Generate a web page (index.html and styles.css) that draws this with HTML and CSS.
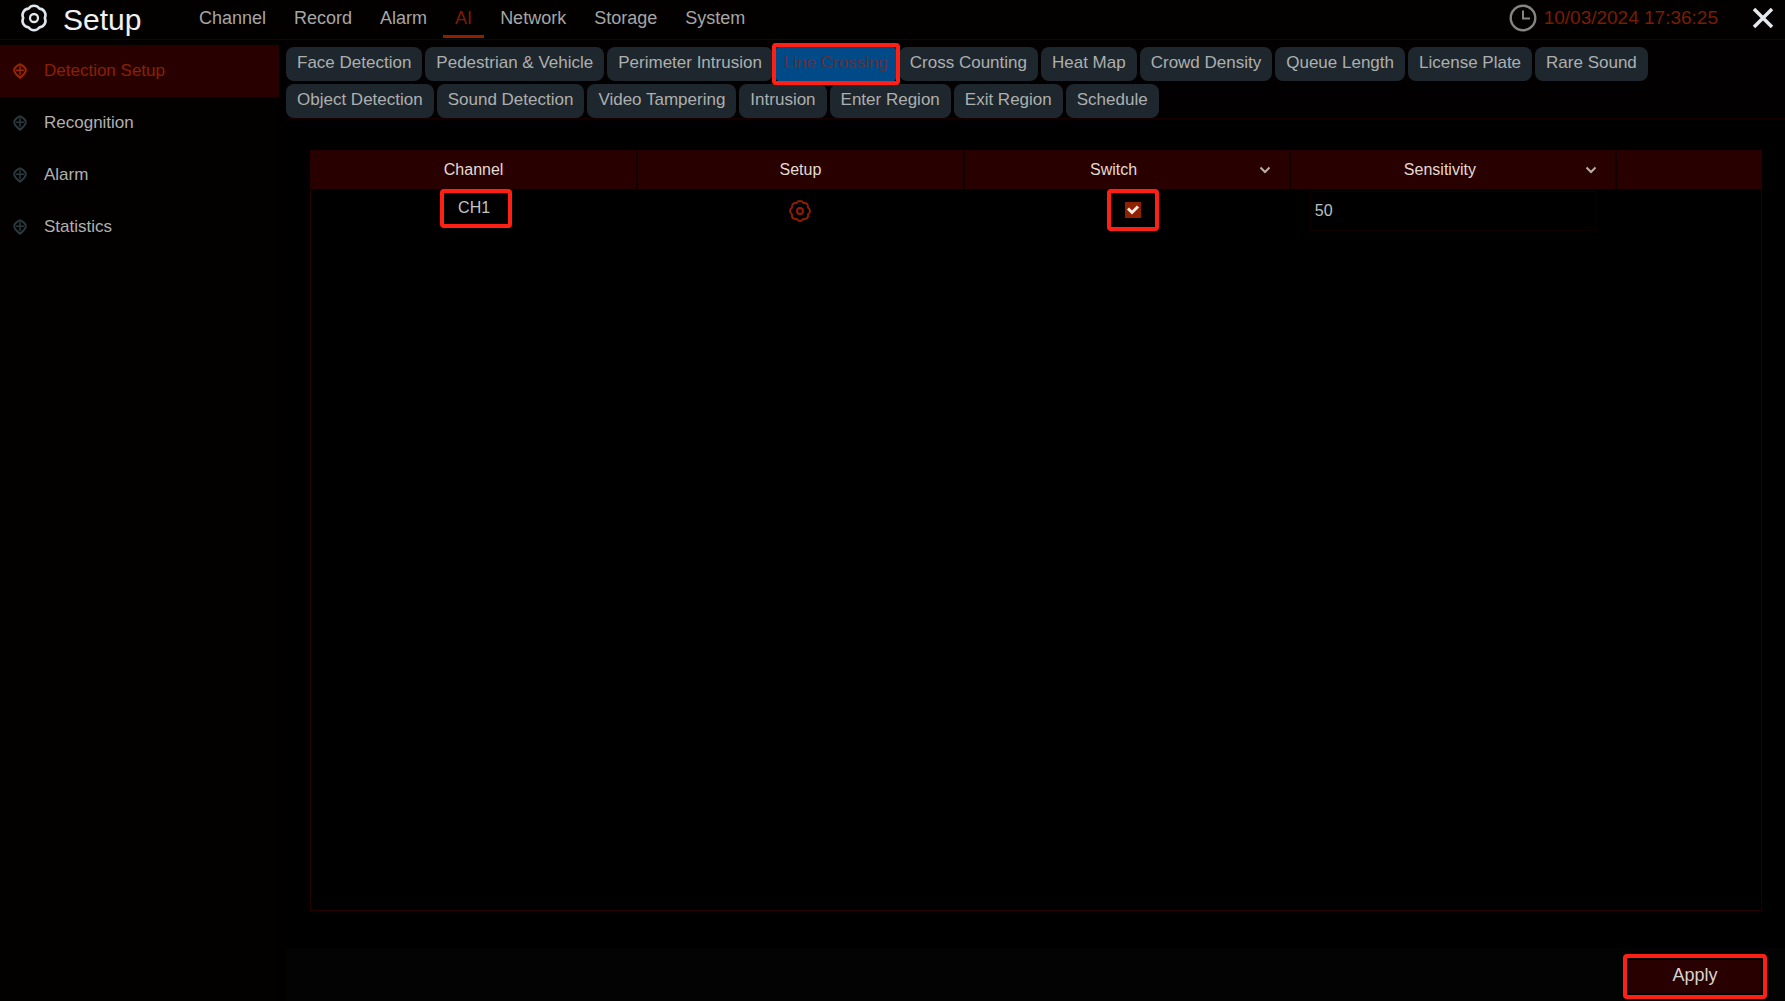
FILE: index.html
```html
<!DOCTYPE html>
<html lang="en">
<head>
<meta charset="utf-8">
<title>Setup</title>
<link rel="stylesheet" href="styles.css">
</head>
<body>
<svg class="defs" aria-hidden="true">
  <symbol id="marker" viewBox="0 0 14 16">
    <path d="M7 1.300C9 2.300 12.800 4 12.800 7.200C12.800 10.200 9 13 7 14.700C5 13 1.200 10.200 1.200 7.200C1.200 4 5 2.300 7 1.300Z" fill="none" stroke="currentColor" stroke-width="2"/>
    <path d="M7 3V12M3 7.300H11" fill="none" stroke="currentColor" stroke-width="1.500"/>
  </symbol>
  <symbol id="chevron" viewBox="0 0 12 8">
    <path d="M1.500 1.500L6 6L10.500 1.500" fill="none" stroke="currentColor" stroke-width="2"/>
  </symbol>
</svg>

<header class="topbar">
  <svg class="brand-icon" viewBox="0 0 28 28" aria-hidden="true">
    <path d="M24.800 14A6.500 6.500 0 0 1 19.400 23.350A6.500 6.500 0 0 1 8.600 23.350A6.500 6.500 0 0 1 3.200 14A6.500 6.500 0 0 1 8.600 4.650A6.500 6.500 0 0 1 19.400 4.650A6.500 6.500 0 0 1 24.800 14Z" fill="none" stroke="currentColor" stroke-width="2.600" stroke-linejoin="round"/>
    <circle cx="14" cy="14" r="4" fill="none" stroke="currentColor" stroke-width="2.300"/>
  </svg>
  <h1 class="brand">Setup</h1>
  <nav class="main-nav" aria-label="Main">
    <a href="#channel">Channel</a>
    <a href="#record">Record</a>
    <a href="#alarm">Alarm</a>
    <a href="#ai" class="active" aria-current="page">AI</a>
    <a href="#network">Network</a>
    <a href="#storage">Storage</a>
    <a href="#system">System</a>
  </nav>
  <svg class="clock-icon" viewBox="0 0 28 28" aria-hidden="true">
    <circle cx="14" cy="14" r="12.300" fill="none" stroke="currentColor" stroke-width="2.400"/>
    <path d="M14 6.500V14.500H21" fill="none" stroke="currentColor" stroke-width="2"/>
  </svg>
  <time class="clock" datetime="2024-10-03T17:36:25">10/03/2024 17:36:25</time>
  <button class="close" type="button" aria-label="Close">
    <svg viewBox="0 0 22 22" aria-hidden="true"><path d="M2 2L20 20M20 2L2 20" stroke="currentColor" stroke-width="3.500" fill="none"/></svg>
  </button>
</header>

<div class="shell">
  <nav class="sidebar" aria-label="AI">
    <a href="#detection" class="active" aria-current="page"><svg aria-hidden="true"><use href="#marker"/></svg>Detection Setup</a>
    <a href="#recognition"><svg aria-hidden="true"><use href="#marker"/></svg>Recognition</a>
    <a href="#ai-alarm"><svg aria-hidden="true"><use href="#marker"/></svg>Alarm</a>
    <a href="#statistics"><svg aria-hidden="true"><use href="#marker"/></svg>Statistics</a>
  </nav>

  <main class="content">
    <div class="tabs" role="tablist">
      <button class="tab" type="button" role="tab">Face Detection</button>
      <button class="tab" type="button" role="tab">Pedestrian &amp; Vehicle</button>
      <button class="tab" type="button" role="tab">Perimeter Intrusion</button>
      <button class="tab selected marked" type="button" role="tab" aria-selected="true">Line Crossing</button>
      <button class="tab" type="button" role="tab">Cross Counting</button>
      <button class="tab" type="button" role="tab">Heat Map</button>
      <button class="tab" type="button" role="tab">Crowd Density</button>
      <button class="tab" type="button" role="tab">Queue Length</button>
      <button class="tab" type="button" role="tab">License Plate</button>
      <button class="tab" type="button" role="tab">Rare Sound</button>
      <button class="tab" type="button" role="tab">Object Detection</button>
      <button class="tab" type="button" role="tab">Sound Detection</button>
      <button class="tab" type="button" role="tab">Video Tampering</button>
      <button class="tab" type="button" role="tab">Intrusion</button>
      <button class="tab" type="button" role="tab">Enter Region</button>
      <button class="tab" type="button" role="tab">Exit Region</button>
      <button class="tab" type="button" role="tab">Schedule</button>
    </div>

    <div class="panel">
      <table class="channels">
        <colgroup><col class="col"><col class="col"><col class="col"><col class="col"><col></colgroup>
        <thead>
          <tr>
            <th scope="col">Channel</th>
            <th scope="col">Setup</th>
            <th scope="col"><div class="menu-head"><span id="switch-head">Switch</span><button type="button" aria-label="Switch options"><svg aria-hidden="true"><use href="#chevron"/></svg></button></div></th>
            <th scope="col"><div class="menu-head"><span id="sens-head">Sensitivity</span><button type="button" aria-label="Sensitivity options"><svg aria-hidden="true"><use href="#chevron"/></svg></button></div></th>
            <td></td>
          </tr>
        </thead>
        <tbody>
          <tr>
            <td class="name-cell"><span class="channel-name marked">CH1</span></td>
            <td class="setup-cell">
              <button class="row-setup" type="button" aria-label="Set up CH1">
                <svg viewBox="0 0 28 28" aria-hidden="true">
                  <path d="M24.160 18.210A4.800 4.800 0 0 1 18.210 24.160A4.800 4.800 0 0 1 9.790 24.160A4.800 4.800 0 0 1 3.840 18.210A4.800 4.800 0 0 1 3.840 9.790A4.800 4.800 0 0 1 9.790 3.840A4.800 4.800 0 0 1 18.210 3.840A4.800 4.800 0 0 1 24.160 9.790A4.800 4.800 0 0 1 24.160 18.210Z" fill="none" stroke="currentColor" stroke-width="2.400" stroke-linejoin="round"/>
                  <circle cx="14" cy="14" r="3.800" fill="none" stroke="currentColor" stroke-width="2.600"/>
                </svg>
              </button>
            </td>
            <td class="switch-cell">
              <label class="switch marked">
                <input type="checkbox" checked aria-labelledby="switch-head">
                <svg viewBox="0 0 16 16" aria-hidden="true"><path d="M3 6.500L7 10.500L13 4.500" fill="none" stroke="currentColor" stroke-width="3"/></svg>
              </label>
            </td>
            <td class="sens-cell"><input class="sens" type="text" value="50" aria-labelledby="sens-head"></td>
            <td></td>
          </tr>
        </tbody>
      </table>
    </div>

    <footer class="actions">
      <button class="apply marked" type="button">Apply</button>
    </footer>
  </main>
</div>
</body>
</html>
```
FILE: styles.css
```css
:root {
  --accent: #7d1c00;
  --line: #260000;
  --head: #290000;
  --mark: #ff2015;
}

* { box-sizing: border-box; }

body {
  margin: 0;
  min-height: 100vh;
  display: flex;
  flex-direction: column;
  background: #000;
  color: #b4b4b4;
  font-family: "Liberation Sans", Arial, sans-serif;
  font-size: 17px;
}

a { color: inherit; text-decoration: none; }

button, input { font: inherit; color: inherit; }

button {
  border: 0;
  padding: 0;
  background: none;
}

svg { display: block; }

.defs { position: absolute; width: 0; height: 0; }

/* Red callout frames drawn over the controls */
.marked { position: relative; }

.marked::after {
  content: "";
  position: absolute;
  inset: -4px;
  border: 4px solid var(--mark);
  border-radius: 4px;
  pointer-events: none;
}

/* Top bar */
.topbar {
  display: flex;
  align-items: center;
  height: 40px;
  padding: 0 11px 4px 20px;
  background: #030000;
  border-bottom: 1px solid var(--line);
}

.brand-icon { width: 28px; height: 28px; color: #dfe6ec; }

.brand {
  width: 124px;
  margin: 4px 0 0 15px;
  color: #f0f0f0;
  font-size: 30px;
  font-weight: 400;
  line-height: 34px;
}

.main-nav {
  display: flex;
  gap: 4px;
  flex: 1;
  font-size: 18px;
  line-height: 34px;
  color: #a6a6a6;
}

.main-nav a { position: relative; padding: 0 12px; }

.main-nav .active { color: var(--accent); }

.main-nav .active::after {
  content: "";
  position: absolute;
  left: 0;
  right: 0;
  bottom: -3px;
  height: 3px;
  background: #8c2000;
}

.clock-icon { width: 28px; height: 28px; color: #858585; }

.clock {
  margin: 0 34px 0 7px;
  color: #7a1d00;
  font-size: 19px;
}

.close { width: 22px; height: 22px; color: #e4e9ee; }

/* Main layout */
.shell { display: flex; flex: 1; }

.sidebar {
  flex: 0 0 279px;
  padding-top: 5px;
  background: #030000;
}

.sidebar a {
  display: flex;
  align-items: center;
  gap: 17px;
  height: 52px;
  padding-left: 13px;
  color: #b0b0b0;
}

.sidebar svg { width: 14px; height: 16px; color: #2a393f; }

.sidebar .active { background: var(--head); color: #8a2100; }

.sidebar .active svg { color: #9c2600; }

.content {
  flex: 1;
  min-width: 0;
  display: flex;
  flex-direction: column;
  padding-left: 7px;
}

/* Tabs */
.tabs {
  display: flex;
  flex-wrap: wrap;
  gap: 3px;
  padding-top: 7px;
  border-bottom: 1px solid #1a0000;
  background: #020000;
}

.tab {
  height: 34px;
  padding: 0 11px 2px;
  border-radius: 8px;
  background: #1e272d;
  color: #adafaf;
  white-space: nowrap;
}

.tab.selected {
  padding: 0 8px 2px;
  border-radius: 3px;
  background: #004b87;
  color: #652f3a;
}

/* Channel table */
.panel {
  flex: 1;
  margin: 31px 23px 37px 24px;
  border: 1px solid var(--line);
}

.channels {
  width: 100%;
  border-collapse: collapse;
  table-layout: fixed;
  font-size: 16px;
}

.col { width: 22.5%; }

.channels thead { background: var(--head); color: #e2dcd0; }

.channels th, .channels td {
  padding: 0;
  text-align: center;
  font-weight: 400;
}

.channels thead tr { height: 38px; }

.channels thead th { border-right: 2px solid #100000; }

.menu-head {
  display: flex;
  align-items: center;
  padding-right: 18px;
}

.menu-head span { flex: 1; padding-left: 4px; }

.menu-head svg { width: 12px; height: 8px; color: #b9afa8; }

.channels tbody tr { height: 42px; color: #c4c4c4; }

.channels .name-cell { padding: 0 0 3px 4px; }

.channel-name {
  display: inline-block;
  padding: 6px 18px 7px 14px;
}

.channels .setup-cell { padding-top: 2px; }

.row-setup, .row-setup svg {
  width: 22px;
  height: 22px;
  margin: auto;
  color: #941c00;
}

.row-setup { vertical-align: middle; }

.channels .switch-cell { padding-left: 12px; }

.switch {
  display: inline-grid;
  place-items: center;
  width: 44px;
  height: 34px;
  vertical-align: middle;
}

.switch input, .switch svg { grid-area: 1 / 1; width: 16px; height: 16px; }

.switch input {
  appearance: none;
  margin: 0;
  background: #8e2100;
}

.switch svg { z-index: 1; color: #f4ece4; pointer-events: none; }

.channels .sens-cell { padding: 2px 20px 0; }

.sens {
  display: block;
  width: 100%;
  height: 40px;
  padding: 0 4px;
  border: 1px solid #100000;
  background: #000;
  color: #b9c0c2;
}

/* Footer */
.actions {
  display: flex;
  justify-content: flex-end;
  padding: 10px 22px 6px 0;
  background: #030303;
}

.apply {
  width: 136px;
  height: 37px;
  padding-bottom: 2px;
  border: 2px solid #000;
  background: var(--head);
  color: #d8d4d0;
  font-size: 18px;
}

.apply.marked::after { inset: -6px; }
```
